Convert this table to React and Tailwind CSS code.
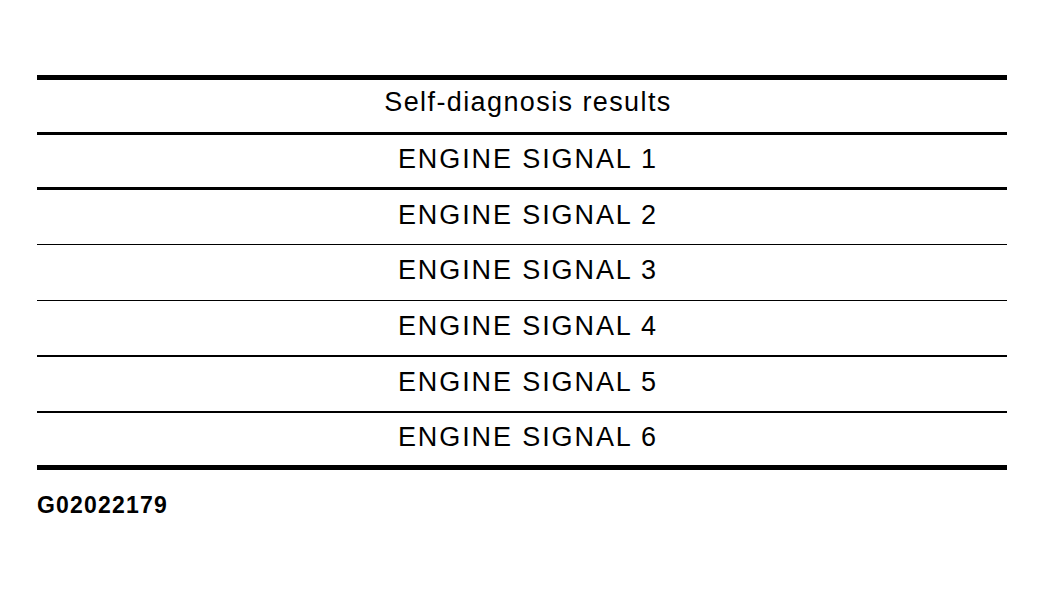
import React from "react";

const rows = [
  { label: "ENGINE SIGNAL 1", h: "h-[55px]", border: "border-b-[3px]" },
  { label: "ENGINE SIGNAL 2", h: "h-[55px]", border: "border-b" },
  { label: "ENGINE SIGNAL 3", h: "h-[56px]", border: "border-b" },
  { label: "ENGINE SIGNAL 4", h: "h-[56px]", border: "border-b-2" },
  { label: "ENGINE SIGNAL 5", h: "h-[56px]", border: "border-b-2" },
  { label: "ENGINE SIGNAL 6", h: "h-[57px]", border: "border-b-[5px]" },
];

function App() {
  return (
    <div
      className="w-[1044px] h-[589px] bg-white text-black pt-[75px] pl-[37px]"
      style={{ fontFamily: '"Liberation Sans", Arial, sans-serif' }}
    >
      {/* Results table */}
      <div className="w-[970px] flex flex-col border-t-[5px] border-black">
        <div className="h-[55px] border-b-[3px] border-black flex items-center justify-center pl-[12px] pb-[7px] text-[27px] tracking-[1.4px]">
          Self-diagnosis results
        </div>
        {rows.map((row) => (
          <div
            key={row.label}
            className={`${row.h} ${row.border} border-black flex items-center justify-center pl-[12px] pb-[4px] text-[27px] tracking-[1.9px]`}
          >
            {row.label}
          </div>
        ))}
      </div>

      {/* Figure id */}
      <div className="mt-[18px] text-[23px] font-bold tracking-[1.2px] leading-normal">
        G02022179
      </div>
    </div>
  );
}

export default App;
